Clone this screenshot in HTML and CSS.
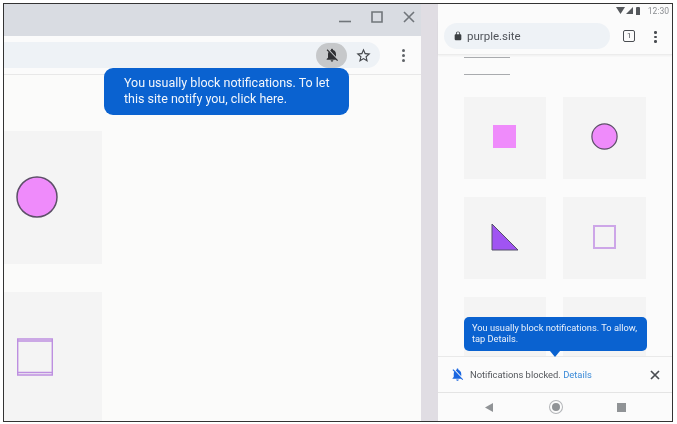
FILE: index.html
```html
<!DOCTYPE html>
<html lang="en">
<head>
<meta charset="utf-8">
<title>Notifications blocked</title>
<link rel="stylesheet" href="styles.css">
</head>
<body>
<div class="frame">
  <section class="desktop">
    <div class="titlebar">
      <svg class="win-icon" viewBox="0 0 12 12"><path d="M0 10.5h12" /></svg>
      <svg class="win-icon" viewBox="0 0 12 12"><path d="M1 1h10v10H1z" /></svg>
      <svg class="win-icon" viewBox="0 0 12 12"><path d="M1 1l10 10M11 1L1 11" /></svg>
    </div>
    <div class="toolbar">
      <div class="omnibox">
        <span class="bell-chip">
          <svg class="icon-14" viewBox="0 0 24 24"><path d="M20 18.69L7.84 6.14 5.27 3.49 4 4.76l2.8 2.8v.01c-.52.99-.8 2.16-.8 3.42v5l-2 2v1h13.73l2 2L21 19.72l-1-1.03zM12 22c1.11 0 2-.89 2-2h-4c0 1.11.89 2 2 2zm6-7.32V11c0-3.08-1.64-5.64-4.5-6.32V4c0-.83-.67-1.5-1.5-1.5s-1.5.67-1.5 1.5v.68c-.15.03-.29.08-.42.12-.1.03-.2.07-.3.11h-.01c-.2.08-.4.18-.59.27-.01 0-.01 0-.02.01L18 14.68z"/></svg>
        </span>
        <svg class="icon-star" viewBox="0 0 24 24"><path d="M22 9.24l-7.19-.62L12 2 9.19 8.63 2 9.24l5.46 4.73L5.82 21 12 17.27 18.18 21l-1.63-7.03L22 9.24zM12 15.4l-3.76 2.27 1-4.28-3.32-2.88 4.38-.38L12 6.1l1.71 4.04 4.38.38-3.32 2.88 1 4.28L12 15.4z"/></svg>
      </div>
      <span class="dots"><i></i><i></i><i></i></span>
    </div>
    <div class="page">
      <div class="tile tile-a">
        <svg class="shape-circle-lg" viewBox="0 0 42 42"><circle cx="21" cy="21" r="20" /></svg>
      </div>
      <div class="tile tile-b">
        <svg class="shape-box-lg" viewBox="0 0 36 38"><path d="M.7 1h34.6v36H.7zM.7 3h34.6M.7 34.5h34.6" /></svg>
      </div>
    </div>
    <div class="bubble">You usually block notifications. To let this site notify you, click here.</div>
  </section>

  <div class="gutter"></div>

  <section class="phone">
    <div class="statusbar">
      <svg class="st-wifi" viewBox="0 0 9 7"><path d="M0 0h9L4.5 7z"/></svg>
      <svg class="st-signal" viewBox="0 0 7 7"><path d="M0 7L7 0v7z"/></svg>
      <span class="st-batt"></span>
      <span class="st-time">12:30</span>
    </div>
    <div class="mtoolbar">
      <div class="murl">
        <svg class="icon-lock" viewBox="0 0 24 24"><path d="M18 8h-1V6c0-2.76-2.24-5-5-5S7 3.24 7 6v2H6c-1.1 0-2 .9-2 2v10c0 1.1.9 2 2 2h12c1.1 0 2-.9 2-2V10c0-1.1-.9-2-2-2zM9 6c0-1.66 1.34-3 3-3s3 1.34 3 3v2H9V6z"/></svg>
        <span>purple.site</span>
      </div>
      <span class="tabcount">1</span>
      <span class="dots dots-m"><i></i><i></i><i></i></span>
    </div>
    <div class="mpage">
      <div class="rule"></div>
      <div class="rule rule-b"></div>
      <div class="mgrid">
        <div class="mtile"><span class="m-square"></span></div>
        <div class="mtile"><svg class="m-circle" viewBox="0 0 27 27"><circle cx="13.5" cy="13.5" r="12.6"/></svg></div>
        <div class="mtile"><svg class="m-tri" viewBox="0 0 28 28"><path d="M1 1L27 27H1z"/></svg></div>
        <div class="mtile"><span class="m-box"></span></div>
        <div class="mtile"></div>
        <div class="mtile"></div>
      </div>
    </div>
    <div class="infobar">
      <svg class="icon-info" viewBox="0 0 24 24"><path d="M20 18.69L7.84 6.14 5.27 3.49 4 4.76l2.8 2.8v.01c-.52.99-.8 2.16-.8 3.42v5l-2 2v1h13.73l2 2L21 19.72l-1-1.03zM12 22c1.11 0 2-.89 2-2h-4c0 1.11.89 2 2 2zm6-7.32V11c0-3.08-1.64-5.64-4.5-6.32V4c0-.83-.67-1.5-1.5-1.5s-1.5.67-1.5 1.5v.68c-.15.03-.29.08-.42.12-.1.03-.2.07-.3.11h-.01c-.2.08-.4.18-.59.27-.01 0-.01 0-.02.01L18 14.68z"/></svg>
      <span class="info-text">Notifications blocked. <a class="info-link">Details</a></span>
      <svg class="icon-close" viewBox="0 0 10 10"><path d="M1 1l8 8M9 1L1 9"/></svg>
    </div>
    <div class="navbar">
      <svg class="nav-back" viewBox="0 0 8 9"><path d="M8 0v9L0 4.5z"/></svg>
      <span class="nav-home"></span>
      <span class="nav-recent"></span>
    </div>
    <div class="tooltip">You usually block notifications. To allow, tap Details.</div>
  </section>
</div>
</body>
</html>
```

FILE: styles.css
```css
* { box-sizing: border-box; }
html, body { margin: 0; height: 100%; background: #fff; }
body { padding: 3px 4px 2px 3px; font-family: Roboto, "Liberation Sans", sans-serif; overflow: hidden; }
.frame { display: flex; width: 670px; height: 419px; border: 1px solid #333; background: #fbfbfa; position: relative; overflow: hidden; }

/* desktop */
.desktop { width: 417px; flex: none; display: flex; flex-direction: column; position: relative; filter: blur(.4px); }
.titlebar { height: 32px; background: #d9dce2; display: flex; justify-content: flex-end; align-items: flex-start; gap: 20px; padding: 6.5px 6px 0 0; }
.win-icon { width: 12px; height: 12px; fill: none; stroke: #70757a; stroke-width: 1.6; }
.toolbar { height: 39px; background: #fbfbfb; border-bottom: 1px solid #e8e8e8; display: flex; align-items: center; padding-right: 16.5px; }
.omnibox { width: 376px; height: 26px; background: #eef2f6; border-radius: 0 13px 13px 0; display: flex; align-items: center; justify-content: flex-end; padding-right: 8px; gap: 8px; }
.bell-chip { width: 31px; height: 25px; border-radius: 13px; background: #c6c8ca; display: flex; align-items: center; justify-content: center; }
.icon-14 { width: 16px; height: 16px; fill: #2f3033; }
.icon-star { width: 17px; height: 17px; fill: #45484c; }
.dots { margin-left: auto; display: flex; flex-direction: column; gap: 2px; }
.dots i { display: block; width: 3px; height: 3px; border-radius: 50%; background: #5f6368; }
.page { flex: 1; background: #fbfbfa; padding-top: 56px; display: flex; flex-direction: column; gap: 28px; }
.tile { width: 98px; background: #f4f4f4; display: flex; align-items: center; }
.tile-a { height: 133px; padding: 0 0 2px 12px; }
.tile-b { height: 129px; padding-left: 13px; }
.shape-circle-lg { width: 42px; height: 42px; fill: #ef8bfb; stroke: #5d4f68; stroke-width: 1.5; }
.shape-box-lg { width: 36px; height: 38px; fill: none; stroke: #bd8fe0; stroke-width: 1.4; }
.bubble { position: absolute; left: 100px; top: 64px; width: 245px; height: 47px; padding: 7px 14px 0 20px; border-radius: 9px; background: #0a62d0; color: #f2f6fc; font-size: 12.5px; line-height: 16px; }

.gutter { width: 17px; flex: none; background: #e0dde3; }

/* phone */
.phone { flex: 1; display: flex; flex-direction: column; position: relative; background: #fbfbfb; filter: blur(.4px); }
.statusbar { height: 13px; margin-bottom: 2px; display: flex; align-items: center; justify-content: flex-end; padding-right: 3px; }
.st-wifi { width: 9px; height: 7px; fill: #55585c; margin-right: 1px; }
.st-signal { width: 7px; height: 7px; fill: #55585c; margin-right: 3px; }
.st-batt { width: 4px; height: 8px; background: #55585c; margin-right: 8px; border-radius: 1px 1px 0 0; }
.st-time { font-size: 8.5px; color: #8a8d91; }
.mtoolbar { height: 36px; display: flex; align-items: flex-start; padding: 4px 0 0 6px; border-bottom: 1px solid #ececec; box-shadow: 0 1px 2px rgba(0,0,0,.05); position: relative; }
.murl { width: 166px; height: 26px; border-radius: 13px; background: #eef2f6; display: flex; align-items: center; padding-left: 9px; gap: 4px; font-size: 11.5px; color: #50545a; }
.icon-lock { width: 10px; height: 10px; fill: #3c4043; }
.tabcount { width: 12px; height: 12px; margin: 7px 0 0 13px; border: 1.5px solid #4a4d52; border-radius: 2px; font-size: 7.5px; line-height: 9px; text-align: center; color: #4a4d52; }
.dots-m { margin: 8px 0 0 19px; gap: 2px; }
.dots-m i { width: 2.5px; height: 2.5px; background: #4a4d52; }
.mpage { flex: 1; min-height: 0; overflow: hidden; padding: 2px 0 0 25.5px; }
.rule { width: 46px; height: 1px; background: #a9abae; }
.rule-b { margin-top: 16px; }
.mgrid { margin-top: 21.5px; display: grid; grid-template-columns: 82.5px 83px; grid-auto-rows: 82.5px; gap: 17.5px 17px; }
.mtile { background: #f4f4f4; display: flex; align-items: center; justify-content: center; padding-bottom: 2px; }
.m-square { width: 23px; height: 23px; background: #ef8bfb; }
.m-circle { width: 27px; height: 27px; fill: #ef8bfb; stroke: #5d4f68; stroke-width: 1.2; }
.m-tri { width: 28px; height: 28px; fill: #a054f2; stroke: #55506a; stroke-width: 1; }
.m-box { width: 23px; height: 24px; border: 2px solid #cda6e8; }
.infobar { height: 37px; flex: none; background: #fbfbfb; border-top: 1px solid #e9e9e9; border-bottom: 1px solid #e4e4e4; display: flex; align-items: center; padding: 0 12px 0 12px; gap: 5px; position: relative; }
.icon-info { width: 15px; height: 15px; fill: #1a66e0; }
.info-text { font-size: 9.4px; color: #54575c; }
.info-link { color: #3a8ad8; }
.icon-close { width: 10px; height: 10px; margin-left: auto; fill: none; stroke: #4a4d52; stroke-width: 1.7; }
.navbar { height: 28px; flex: none; display: flex; align-items: center; padding-left: 47px; }
.nav-back { width: 8px; height: 9px; fill: #909396; flex: none; }
.nav-home { width: 12px; height: 12px; margin-left: 57px; border-radius: 50%; background: #909396; border: 2px solid #fbfbfb; box-shadow: 0 0 0 1px #b3b5b8; flex: none; }
.nav-recent { width: 9px; height: 9px; margin-left: 55px; background: #909396; flex: none; }
.tooltip { position: absolute; left: 26px; top: 313px; width: 183px; height: 34px; padding: 5px 8px 0; border-radius: 5px; background: #0a62d0; color: #eaf1fb; font-size: 9.25px; line-height: 11px; }
.tooltip::after { content: ""; position: absolute; left: 86px; bottom: -6px; width: 0; height: 0; border: solid transparent; border-width: 6px 5px 0; border-top-color: #0a62d0; }
```
